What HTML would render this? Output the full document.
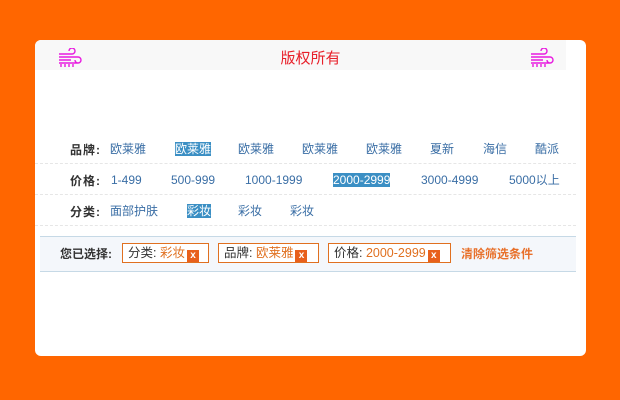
<!DOCTYPE html>
<html><head><meta charset="utf-8"><style>
body{margin:0;width:620px;height:400px;background:#ff6600;font-family:"Liberation Sans","Noto Sans CJK SC",sans-serif;font-size:12px;position:relative;overflow:hidden}
.card{position:absolute;left:35px;top:40px;width:551px;height:316px;background:#fff;border-radius:6px;overflow:hidden}
.hd{position:absolute;left:0;top:0;width:531px;height:30px;background:#f8f8f8}
.title{position:absolute;left:0;width:551px;top:7px;text-align:center;color:#e8202a;font-size:15px}
.ic{position:absolute;top:8px}
.row{position:absolute;left:0;width:541px;height:30px;border-bottom:1px dashed #e6e6e6}
.lab{position:absolute;left:35px;font-weight:bold;color:#333;letter-spacing:1px}
.it{position:absolute;color:#3a6ea5;white-space:nowrap;line-height:14px}
.sel{background:#3b8fc4;color:#fff}
.bar{position:absolute;left:5px;width:536px;top:196px;height:34px;background:#f4f7fb;border-top:1px solid #c6d9e6;border-bottom:1px solid #c6d9e6}
.tag{position:absolute;top:6px;height:18px;border:1px solid #e07020;background:#fff;line-height:18px;color:#333;padding-left:5px;white-space:nowrap;font-size:12.5px}
.tag b{font-weight:normal;color:#e07020}
.x{display:inline-block;width:12px;height:12px;background:#e8601c;color:#fff;font-size:10px;line-height:12px;text-align:center;vertical-align:-1px;margin:0 1px 0 2px;font-weight:bold}
</style></head><body>
<div class="card">
<div class="hd"></div>
<div class="title">版权所有</div>
<svg class="ic" style="left:22px" width="26" height="20" viewBox="0 0 26 20" fill="none" stroke="#e81adf" stroke-width="1.4"><path d="M2 6h13a3 3 0 1 0-3-3M2 9h19a3 3 0 1 1-3 3M2 12h12M4 16v3M8 16v3M12 16v3M16 16v3M2 15h20"/></svg>
<svg class="ic" style="left:494px" width="26" height="20" viewBox="0 0 26 20" fill="none" stroke="#e81adf" stroke-width="1.4"><path d="M2 6h13a3 3 0 1 0-3-3M2 9h19a3 3 0 1 1-3 3M2 12h12M4 16v3M8 16v3M12 16v3M16 16v3M2 15h20"/></svg>

<div class="row" style="top:93px">
<span class="lab" style="top:8px">品牌:</span>
<span class="it" style="left:75px;top:9px">欧莱雅</span>
<span class="it sel" style="left:140px;top:9px">欧莱雅</span>
<span class="it" style="left:203px;top:9px">欧莱雅</span>
<span class="it" style="left:267px;top:9px">欧莱雅</span>
<span class="it" style="left:331px;top:9px">欧莱雅</span>
<span class="it" style="left:395px;top:9px">夏新</span>
<span class="it" style="left:448px;top:9px">海信</span>
<span class="it" style="left:500px;top:9px">酷派</span>
</div>
<div class="row" style="top:124px">
<span class="lab" style="top:8px">价格:</span>
<span class="it" style="left:76px;top:9px">1-499</span>
<span class="it" style="left:136px;top:9px">500-999</span>
<span class="it" style="left:210px;top:9px">1000-1999</span>
<span class="it sel" style="left:298px;top:9px">2000-2999</span>
<span class="it" style="left:386px;top:9px">3000-4999</span>
<span class="it" style="left:474px;top:9px">5000以上</span>
</div>
<div class="row" style="top:155px">
<span class="lab" style="top:8px">分类:</span>
<span class="it" style="left:75px;top:9px">面部护肤</span>
<span class="it sel" style="left:152px;top:9px">彩妆</span>
<span class="it" style="left:203px;top:9px">彩妆</span>
<span class="it" style="left:255px;top:9px">彩妆</span>
</div>
<div class="bar">
<span style="position:absolute;left:20px;top:8px;font-weight:bold;color:#333">您已选择:</span>
<span class="tag" style="left:82px;width:80px">分类: <b>彩妆</b><span class="x">x</span></span>
<span class="tag" style="left:178px;width:94px">品牌: <b>欧莱雅</b><span class="x">x</span></span>
<span class="tag" style="left:288px;width:116px">价格: <b>2000-2999</b><span class="x">x</span></span>
<span style="position:absolute;left:421px;top:8px;font-weight:bold;color:#e8702a">清除筛选条件</span>
</div>
</div>
</body></html>
